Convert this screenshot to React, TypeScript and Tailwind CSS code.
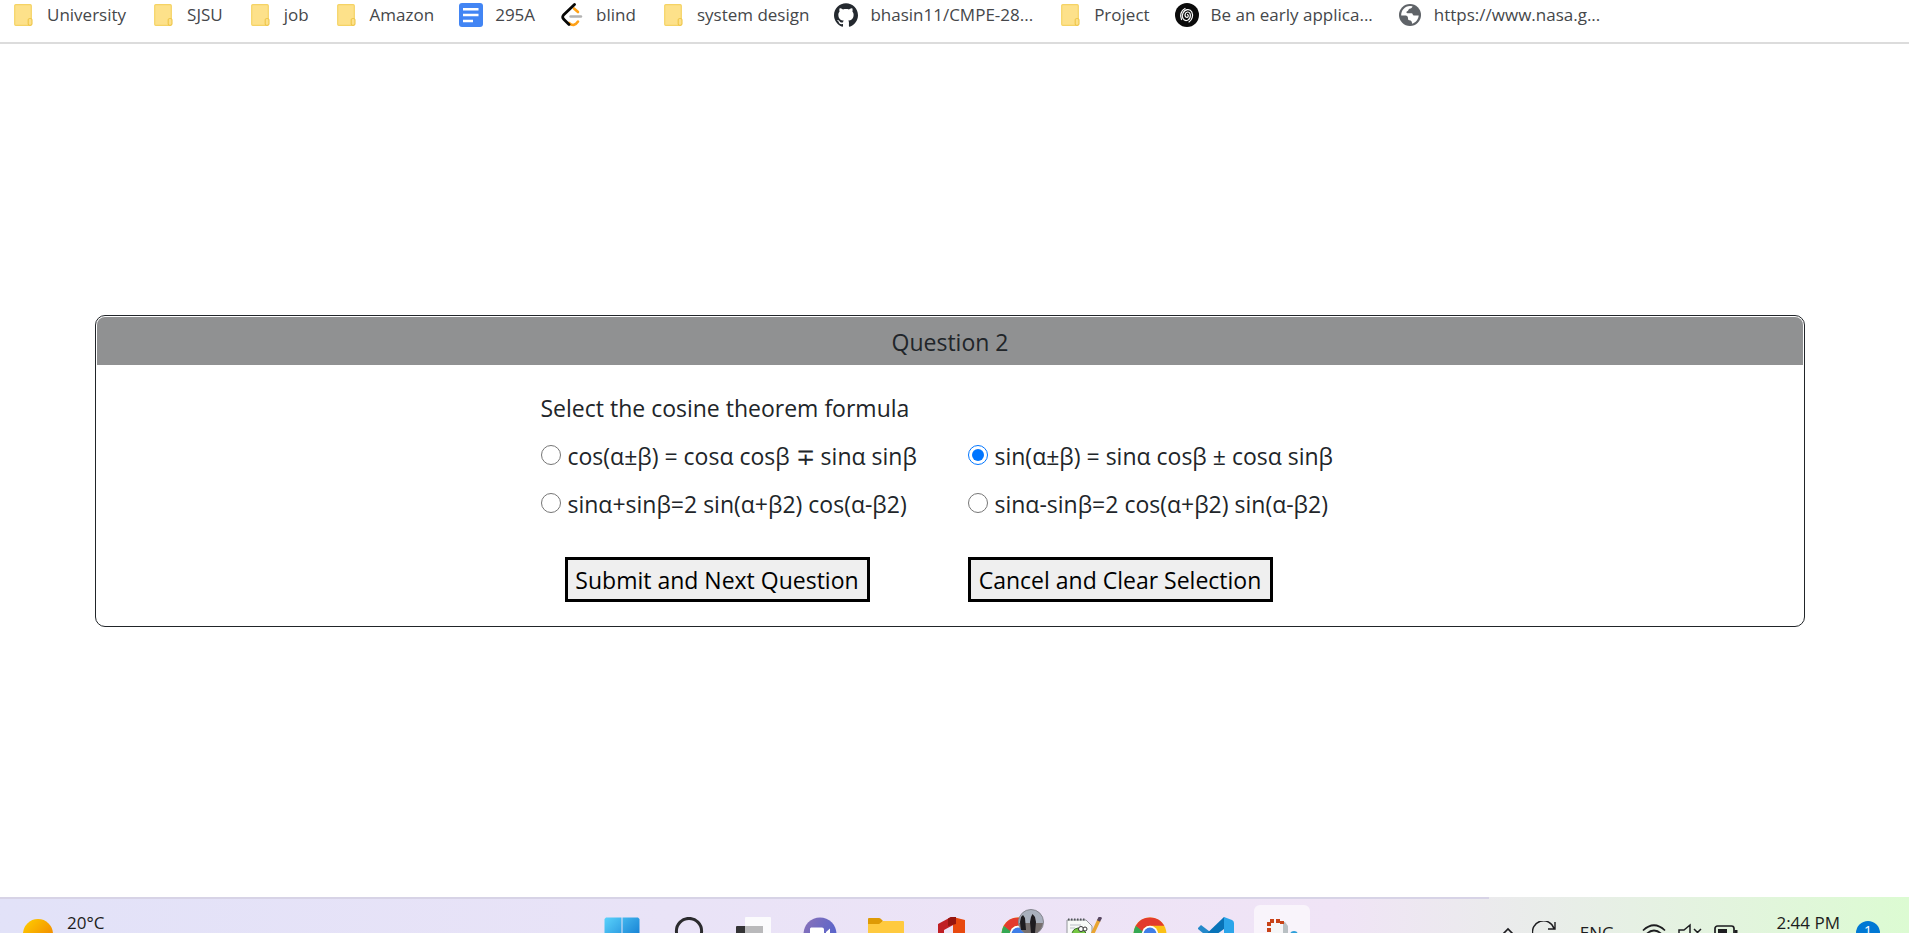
import React, { useState } from "react";
import { SiGithub } from "react-icons/si";

const FolderIcon = () => (
  <svg viewBox="0 0 24 24" className="size-6">
    <rect x="3.7" y="1.7" width="16.6" height="20.6" rx="1" fill="#fde18a" stroke="#f5d365" strokeWidth="1.2" />
    <rect x="17.2" y="15.6" width="3.8" height="6.6" rx="1.2" fill="#fde18a" stroke="#ecc240" strokeWidth="1" />
  </svg>
);

const DocIcon = () => (
  <svg viewBox="0 0 24 24" className="size-6">
    <rect width="24" height="24" rx="3" fill="#4285f4" />
    <path d="M4 6.3h15.5M4 12h15.5M4 18h10" stroke="#fff" strokeWidth="2.4" />
  </svg>
);

const BlindIcon = () => (
  <svg viewBox="0 0 24 24" className="size-6" fill="none" strokeLinecap="round" strokeLinejoin="round">
    <path d="M14 5.5 18 9M18 18.5q-4 6-9 1.500" stroke="#ffa116" strokeWidth="2.6" />
    <path d="M10.500 13.500h10.500" stroke="#b3b3b3" strokeWidth="2.4" />
    <path d="M14.500 1.500 3.500 12q-1.600 2 0 4l5.500 5.500" stroke="#070706" strokeWidth="2.8" />
  </svg>
);

const SpiralIcon = () => (
  <svg viewBox="0 0 24 24" className="size-6" fill="none">
    <circle cx="12" cy="12" r="12" fill="#0b0b0b" />
    <g stroke="#fff" strokeWidth="1.2" strokeLinecap="round">
      <path d="M12.500 11.500c1.500.8.6 3.500-1.200 2.800-2.300-1-1.200-5.500 1.500-5.300 3.600.4 3.300 7-.3 8.300-4.300 1.300-6.300-3.800-4.500-7.300 2-4 7-4.500 8.800-1 1.700 3.500.2 8-2.800 10" />
      <path d="M6.500 16.500C4.500 12.500 6 7.500 10 5.500" />
    </g>
  </svg>
);

const GlobeIcon = () => (
  <svg viewBox="0 0 24 24" className="size-6">
    <circle cx="12" cy="12" r="11" fill="#5f6368" />
    <path d="M14.500 3.300c-.3 1.700-1.400 2.200-3 2.400-1.300.2-.8 2.300-2.300 2.500-1.300.2-.9 2 .3 2h4c1.500 0 1 2.300 2.500 2.400h4.700c-.3 4-3 7.300-6.600 8.100 0-1.900-.8-3.400-2.800-3.500-1.300-.1-1.300-1.100-1.300-2.200 0-1.400-1-2.400-2.400-2.400H3.200C3 7.500 6.700 3 12 3z" fill="#fff" />
  </svg>
);

const bookmarks = [
  { label: "University", icon: <FolderIcon /> },
  { label: "SJSU", icon: <FolderIcon /> },
  { label: "job", icon: <FolderIcon /> },
  { label: "Amazon", icon: <FolderIcon /> },
  { label: "295A", icon: <DocIcon /> },
  { label: "blind", icon: <BlindIcon /> },
  { label: "system design", icon: <FolderIcon /> },
  { label: "bhasin11/CMPE-28...", icon: <SiGithub className="size-6 text-[#24292f]" /> },
  { label: "Project", icon: <FolderIcon /> },
  { label: "Be an early applica...", icon: <SpiralIcon /> },
  { label: "https://www.nasa.g...", icon: <GlobeIcon /> },
];

const options = [
  "cos(α±β) = cosα cosβ ∓ sinα sinβ",
  "sin(α±β) = sinα cosβ ± cosα sinβ",
  "sinα+sinβ=2 sin(α+β2) cos(α-β2)",
  "sinα-sinβ=2 cos(α+β2) sin(α-β2)",
];

const ChromeIcon = () => (
  <svg viewBox="0 0 34 34" className="size-[34px]">
    <circle cx="17" cy="17" r="16.500" fill="#fbc116" />
    <path d="M17 17 2.700 8.800A16.500 16.500 0 0 0 14 33.200z" fill="#34a853" />
    <path d="M2.700 8.800a16.500 16.500 0 0 1 28.600 0H17a8.200 8.200 0 0 0-7.500 5.500z" fill="#e33b2e" />
    <circle cx="17" cy="17" r="8.200" fill="#fff" />
    <circle cx="17" cy="17" r="6.500" fill="#3f7ee8" />
  </svg>
);

const apps = [
  {
    name: "Start",
    icon: (
      <svg viewBox="0 0 36 36" className="size-9">
        <defs>
          <linearGradient id="win" x1="0" y1="0" x2="1" y2="1">
            <stop offset="0" stopColor="#5ad2fb" />
            <stop offset="1" stopColor="#0067c8" />
          </linearGradient>
        </defs>
        <path d="M2 0.500h15.500v16.500H.5V2zM18.500.5H34L35.500 2v15h-17zM.5 18.500H17V35H.5zM18.500 18.500h17V35h-17z" fill="url(#win)" />
      </svg>
    ),
  },
  {
    name: "Search",
    icon: (
      <svg viewBox="0 0 36 36" className="size-9" fill="none">
        <circle cx="19" cy="14" r="12.600" stroke="#2b2b2e" strokeWidth="3" />
        <path d="m27 23 7 8" stroke="#2b2b2e" strokeWidth="3" />
      </svg>
    ),
  },
  {
    name: "Task view",
    icon: (
      <svg viewBox="0 0 36 36" className="size-9">
        <rect x="0" y="9" width="27" height="20" rx="1" fill="#333335" />
        <rect x="9" y="0" width="26" height="26" rx="1" fill="#fbfbfd" />
        <rect x="9" y="9" width="18" height="17" fill="#b9b9bb" />
      </svg>
    ),
  },
  {
    name: "Chat",
    icon: (
      <svg viewBox="0 0 36 36" className="size-9">
        <defs>
          <linearGradient id="chat" x1="0" y1="0" x2="1" y2="0.6">
            <stop offset="0" stopColor="#8b72b8" />
            <stop offset="1" stopColor="#5563cc" />
          </linearGradient>
        </defs>
        <circle cx="18" cy="17" r="16.500" fill="url(#chat)" />
        <path d="M9 10.500h11q2 0 2 2V23H8V11.500zM24 15l4-3.500V23l-4-3z" fill="#fff" />
      </svg>
    ),
  },
  {
    name: "Files",
    icon: (
      <svg viewBox="0 0 36 36" className="size-9">
        <path d="M0 2q0-1 1-1h10q1 0 2 1l2 2-3 4H0z" fill="#de9a05" />
        <path d="M0 7h11l4-3h20q1 0 1 1v25H0z" fill="#ffca3f" />
      </svg>
    ),
  },
  {
    name: "Office",
    icon: (
      <svg viewBox="0 0 36 36" className="size-9">
        <path d="M4 7 17 0l4 2v5L10 13v13l-6 2z" fill="#c01f24" />
        <path d="m19 0 12 3v28l-12 4z" fill="#e8490f" />
        <path d="m14 1.500 3-1.500h5v7l-8 2z" fill="#96150f" />
      </svg>
    ),
  },
  {
    name: "Chrome profile",
    icon: (
      <span className="relative">
        <ChromeIcon />
        <svg viewBox="0 0 26 26" className="absolute -top-2 left-[17px] size-[26px]">
          <circle cx="13" cy="13" r="12.500" fill="#a9b0bd" stroke="#85868e" />
          <path d="M1 14h24q-2 11-12 11.500T1 14" fill="#77706f" />
          <path d="m3 21-1-8 1-5 2-2 2 3 1 12zM13 24l-1-11 1-5 1.500-3L17 8l1 5-1 11z" fill="#1e1c20" />
        </svg>
      </span>
    ),
  },
  {
    name: "Notepad++",
    icon: (
      <svg viewBox="0 0 36 36" className="size-9">
        <path d="M1 3h19l6 6v27H1z" fill="#f8faf8" stroke="#92969a" strokeWidth="1" />
        <path d="M2 2.500h18" stroke="#505458" strokeWidth="2" strokeDasharray="1.500 1.500" />
        <path d="M4 8h11M4 11h5" stroke="#b9bec6" />
        <path d="M6 18q0-6 6-7l6 2 3 5-3 5H6z" fill="#75c843" stroke="#386b24" />
        <circle cx="15" cy="12" r="2.500" fill="#fff" stroke="#333" />
        <circle cx="19" cy="12" r="2" fill="#fff" stroke="#333" />
        <path d="m33 3-8 17" stroke="#e9a431" strokeWidth="3.500" />
        <path d="m34.500 0-2 4" stroke="#574660" strokeWidth="3.500" />
      </svg>
    ),
  },
  { name: "Chrome", icon: <ChromeIcon /> },
  {
    name: "Code",
    icon: (
      <svg viewBox="0 0 36 36" className="size-9">
        <path d="m0 11 3-3L28 27v8L0 12z" fill="#2489ca" />
        <path d="M0 25 26 0l3 6-3 6L4 28z" fill="#0873b8" />
        <path d="m26 0 8 3q2 1 2 3v24l-10 5z" fill="#2ba5ea" />
      </svg>
    ),
  },
  {
    name: "Snip",
    icon: (
      <svg viewBox="0 0 36 36" className="size-9">
        <path d="M19 5h2l3 4v23H10z" fill="#b9c0c3" />
        <path d="M5 4h14v26H5z" fill="#f6f6f8" />
        <path d="M5 33V4h13v3" fill="none" stroke="#c84318" strokeWidth="4" strokeDasharray="4 2" />
        <circle cx="30" cy="18" r="4" fill="#2d9fd9" />
      </svg>
    ),
  },
];

export default function App() {
  const [selected, setSelected] = useState<number | null>(1);

  return (
    <div className="flex h-screen flex-col overflow-hidden bg-white font-['Open_Sans','Noto_Sans',sans-serif] text-[#212529]">
      <nav className="flex h-11 shrink-0 items-start gap-[25px] overflow-hidden border-b-2 border-[#dcdcdc] pt-[3px] pl-[11px]">
        {bookmarks.map((b) => (
          <a key={b.label} href="#" className="flex shrink-0 items-center gap-3 text-[17px] leading-6 whitespace-nowrap text-[#45474a]">
            {b.icon}
            {b.label}
          </a>
        ))}
      </nav>

      <main className="flex min-h-0 flex-1 flex-col justify-center pr-[104px] pl-[95px]">
        <section className="rounded-[10px] border border-[#212529] text-[23px] leading-9">
          <div className="p-px pb-0">
            <h1 className="rounded-t-lg bg-[#909192] pt-[7px] pb-[5px] text-center">Question 2</h1>
          </div>
          <form className="mx-auto flex w-[819px] flex-col pt-[25px] pb-6" onSubmit={(e) => e.preventDefault()}>
            <fieldset>
              <legend>Select the cosine theorem formula</legend>
              <div className="grid grid-cols-[427px_1fr] gap-y-3 pt-3">
                {options.map((o, i) => (
                  <label key={o} className="flex items-start gap-[7px] whitespace-nowrap">
                    <input
                      type="radio"
                      name="answer"
                      className="mt-[7px] size-5 shrink-0 accent-[#0075ff]"
                      checked={selected === i}
                      onChange={() => setSelected(i)}
                    />
                    {o}
                  </label>
                ))}
              </div>
            </fieldset>
            <div className="grid grid-cols-[427px_1fr] pt-[35px]">
              <button type="submit" className="ml-6 h-[45px] w-[305px] border-3 border-black bg-[#efefef] pt-0.5 whitespace-nowrap text-black">
                Submit and Next Question
              </button>
              <button type="button" onClick={() => setSelected(null)} className="h-[45px] w-[305px] border-3 border-black bg-[#efefef] pt-0.5 whitespace-nowrap text-black">
                Cancel and Clear Selection
              </button>
            </div>
          </form>
        </section>
      </main>

      <footer className="flex h-9 shrink-0 flex-col overflow-hidden bg-linear-to-r from-[#e2e2f8] via-[#f0e4f6] via-70% to-[#dcfbd2] text-[17px] leading-6 text-[#1d1d20]">
        <div className="h-0.5 w-[78%] shrink-0 bg-[#d7d3e6]" />
        <div className="flex h-14 shrink-0 items-start pr-[29px] pl-[21px]">
          <div className="flex flex-1 items-start gap-[14px] pt-3 pl-0.5">
            <svg viewBox="0 0 30 30" className="mt-2 size-[30px]">
              <defs>
                <linearGradient id="sun" x1="0" y1="0" x2="1" y2="1">
                  <stop offset="0" stopColor="#ffd000" />
                  <stop offset="1" stopColor="#ee7800" />
                </linearGradient>
              </defs>
              <circle cx="15" cy="15" r="15" fill="url(#sun)" />
            </svg>
            <span>20°C</span>
          </div>
          <div className="flex pt-1.5">
            {apps.map((a) => (
              <button
                key={a.name}
                type="button"
                aria-label={a.name}
                className={
                  a.name === "Snip"
                    ? "mx-[5px] flex h-14 w-14 items-start justify-center rounded-md bg-white/60 pt-3"
                    : "flex h-14 w-[66px] items-start justify-center pt-3"
                }
              >
                {a.icon}
              </button>
            ))}
          </div>
          <div className="flex flex-1 items-start justify-end pt-3">
            <svg viewBox="0 0 14 10" className="mt-4 mr-[17px] h-[10px] w-[14px]" fill="none" stroke="#1d1d20" strokeWidth="1.600">
              <path d="m1 8 6-6 6 6" />
            </svg>
            <svg viewBox="0 0 24 24" className="mt-2.5 mr-6 size-6" fill="none" stroke="#1d1d20" strokeWidth="1.400">
              <path d="M1 14A10.500 10.500 0 0 1 22 7.500M23 1v7h-7M22 16A11 11 0 0 1 1 14" />
            </svg>
            <span className="mt-2.5 mr-7">ENG</span>
            <svg viewBox="0 0 24 20" className="mt-3 mr-3 h-5 w-6" fill="none" stroke="#1d1d20" strokeWidth="1.700">
              <path d="M1 7.500Q12-3 23 7.500M4.500 11Q12 4 19.500 11M8 14.500q4-3.500 8 0" />
            </svg>
            <svg viewBox="0 0 24 20" className="mt-3 mr-3 h-5 w-6" fill="none" stroke="#1d1d20" strokeWidth="1.500">
              <path d="M1 7h5l6-5v16l-6-5H1zM16 6l7 7M23 6l-7 7" />
            </svg>
            <svg viewBox="0 0 24 16" className="mt-3.5 mr-[38px] h-4 w-6" fill="none" stroke="#1d1d20" strokeWidth="1.700">
              <rect x="1" y="1" width="19" height="13" rx="2.500" />
              <path d="M22 5v6" strokeWidth="3" />
              <rect x="4" y="4" width="9" height="7" fill="#1d1d20" stroke="none" />
            </svg>
            <time className="mr-4 whitespace-nowrap">2:44 PM</time>
            <span className="mt-2.5 flex size-6 items-center justify-center rounded-full bg-[#0078d4] pb-1 text-sm text-white">1</span>
          </div>
        </div>
      </footer>
    </div>
  );
}
